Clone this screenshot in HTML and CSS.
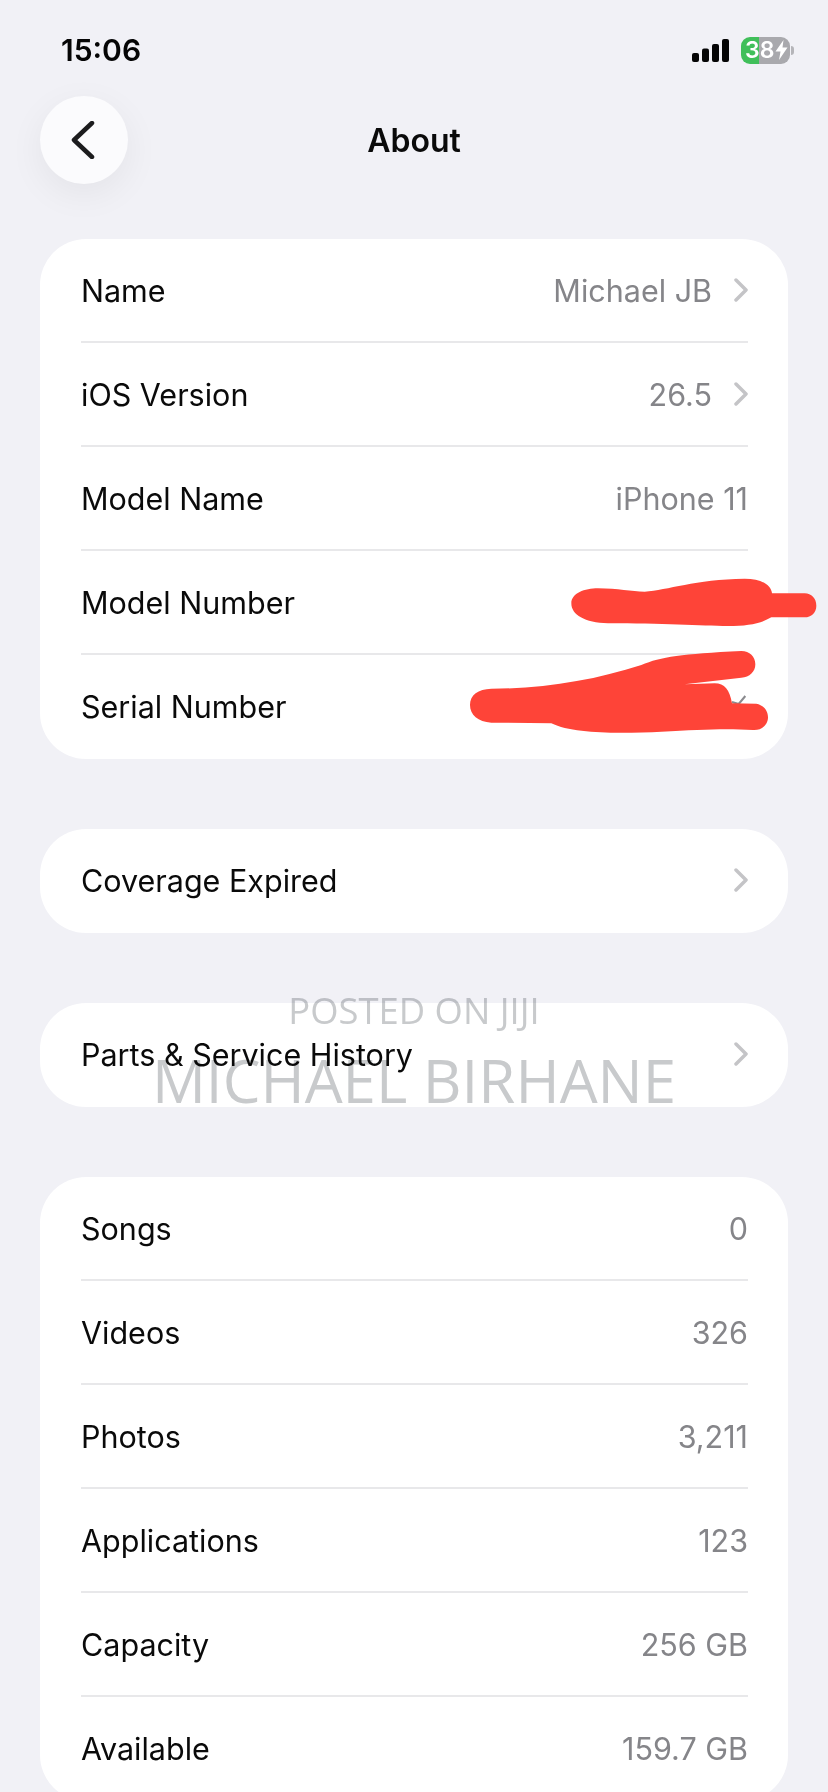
FILE: index.html
```html
<!DOCTYPE html>
<html lang="en">
<head>
<meta charset="UTF-8" />
<meta name="viewport" content="width=device-width, initial-scale=1.0"/>
<title>About</title>
<link rel="stylesheet" href="styles.css">
</head>
<body>
<div class="page">
  <div class="status">
    <span class="time">15:06</span>
    <div class="status-right">
      <svg class="signal" width="37" height="23" viewBox="0 0 37 23">
        <rect x="0" y="14" width="7" height="9" rx="2"/>
        <rect x="10" y="9.500" width="7" height="13.500" rx="2"/>
        <rect x="20" y="5" width="7" height="18" rx="2"/>
        <rect x="30" y="0" width="7" height="23" rx="2"/>
      </svg>
      <div class="battery">
        <div class="battery-body">
          <span class="battery-num">38</span>
          <svg class="bolt" width="13" height="20" viewBox="0 0 13 20"><path d="M8.500 0 L0.500 11.500 H5.500 L4 20 L12.500 7.500 H7.500 Z"/></svg>
        </div>
        <div class="battery-tip"></div>
      </div>
    </div>
  </div>

  <header class="nav">
    <button class="back">
      <svg width="24" height="38" viewBox="0 0 24 38"><path d="M21 2 L3 19 L21 36"/></svg>
    </button>
    <h1>About</h1>
  </header>

  <section class="card">
    <div class="row"><span>Name</span><span class="val">Michael JB<svg class="chev" width="14" height="24" viewBox="0 0 14 24"><path d="M2 2 L12 12 L2 22"/></svg></span></div>
    <div class="row"><span>iOS Version</span><span class="val">26.5<svg class="chev" width="14" height="24" viewBox="0 0 14 24"><path d="M2 2 L12 12 L2 22"/></svg></span></div>
    <div class="row"><span>Model Name</span><span class="val">iPhone 11</span></div>
    <div class="row"><span>Model Number</span></div>
    <div class="row"><span>Serial Number</span></div>
  </section>

  <section class="card">
    <div class="row"><span>Coverage Expired</span><span class="val"><svg class="chev" width="14" height="24" viewBox="0 0 14 24"><path d="M2 2 L12 12 L2 22"/></svg></span></div>
  </section>

  <section class="card">
    <div class="row"><span>Parts &amp; Service History</span><span class="val"><svg class="chev" width="14" height="24" viewBox="0 0 14 24"><path d="M2 2 L12 12 L2 22"/></svg></span></div>
  </section>

  <section class="card">
    <div class="row"><span>Songs</span><span class="val">0</span></div>
    <div class="row"><span>Videos</span><span class="val">326</span></div>
    <div class="row"><span>Photos</span><span class="val">3,211</span></div>
    <div class="row"><span>Applications</span><span class="val">123</span></div>
    <div class="row"><span>Capacity</span><span class="val">256 GB</span></div>
    <div class="row"><span>Available</span><span class="val">159.7 GB</span></div>
  </section>

  <!-- paint scribbles over the model and serial numbers -->
  <svg class="scribble" width="400" height="240" viewBox="0 0 1200 720">
    <path class="tail" d="M912 486 L932 492 L952 468"/>
    <path d="M430 190 C430 160 470 145 510 145 C570 145 610 155 650 155 C720 150 800 118 950 116 C1000 116 1030 135 1032 160 L1130 160 C1150 160 1165 175 1165 197 C1165 218 1150 232 1130 232 L1030 232 C1000 250 960 258 900 258 C820 258 700 250 540 250 C470 248 430 225 430 190 Z"/>
    <path d="M126 495 C126 465 150 447 190 446 C350 446 500 420 640 375 C700 350 760 342 940 333 C965 333 982 350 982 373 C982 395 965 412 940 413 L770 433 L860 430 C890 430 905 450 912 490 L985 491 C1005 495 1020 510 1020 532 C1020 555 1000 572 975 570 C900 565 820 568 700 575 C600 580 440 585 370 550 L190 548 C150 545 126 525 126 495 Z"/>
  </svg>

  <div class="wm wm-top">POSTED ON JIJI</div>
  <div class="wm wm-name">MICHAEL BIRHANE</div>
</div>
</body>
</html>
```

FILE: styles.css
```css
html,body {margin:0;padding:0;background:#f1f1f6;}
body {font-family:"Inter","Liberation Sans",sans-serif;color:#0a0a0a;}
.page {position:relative;width:828px;height:1792px;overflow:hidden;background:#f1f1f6;}

.status {display:flex;justify-content:space-between;align-items:center;height:36px;padding:32px 34px 0 61px;}
.time {font-size:30px;font-weight:600;color:#050505;line-height:36px;}
.status-right {display:flex;align-items:center;gap:12px;}
.signal {display:block;fill:#050505;}
.battery {display:flex;align-items:center;gap:1px;}
.battery-body {position:relative;display:flex;align-items:center;gap:1px;width:49px;height:27px;padding-left:4px;box-sizing:border-box;border-radius:9px;overflow:hidden;background:linear-gradient(90deg,#40bf5a 0 18px,#a9a9ad 18px);}
.battery-num {font-size:23px;font-weight:600;color:#fff;line-height:27px;}
.bolt {display:block;fill:#fff;}
.battery-tip {width:3px;height:9px;border-radius:0 3px 3px 0;background:#b5b5b9;}

.nav {position:relative;display:flex;align-items:center;justify-content:center;height:89px;margin-top:28px;}
.nav h1 {margin:0;font-size:32px;font-weight:600;color:#0a0a0a;}
.back {position:absolute;left:40px;top:0;display:flex;align-items:center;justify-content:center;width:88px;height:88px;padding:0 3px 0 0;border:none;border-radius:50%;background:#fbfbfd;box-shadow:0 10px 36px rgba(0,0,0,0.06);}
.back path {fill:none;stroke:#1c1c1e;stroke-width:4.500;stroke-linecap:round;stroke-linejoin:round;}

.card {margin:70px 40px 0;padding:0 40px 0 41px;background:#fff;border-radius:46px;}
.nav + .card {margin-top:54px;}
.row {display:flex;justify-content:space-between;align-items:center;box-sizing:border-box;height:104px;border-bottom:2px solid #e8e8ea;font-size:30.500px;}
.row:last-child {border-bottom-color:transparent;}
.val {display:flex;align-items:center;gap:22px;color:#858589;}
.chev {display:block;}
.chev path {fill:none;stroke:#c4c4c7;stroke-width:3.500;stroke-linecap:round;stroke-linejoin:round;}

.scribble {position:absolute;left:428px;top:540px;}
.scribble path {fill:#fe4438;}
.scribble .tail {fill:none;stroke:#8a8a8e;stroke-width:6;}

/* multiply keeps the row text black where the watermark crosses it */
.wm {position:absolute;left:0;right:0;text-align:center;font-family:"Open Sans","Liberation Sans",sans-serif;color:#c8cacc;line-height:1;white-space:nowrap;mix-blend-mode:multiply;}
.wm-top {top:992px;font-size:36.400px;}
.wm-name {top:1050px;font-size:60px;}
```
